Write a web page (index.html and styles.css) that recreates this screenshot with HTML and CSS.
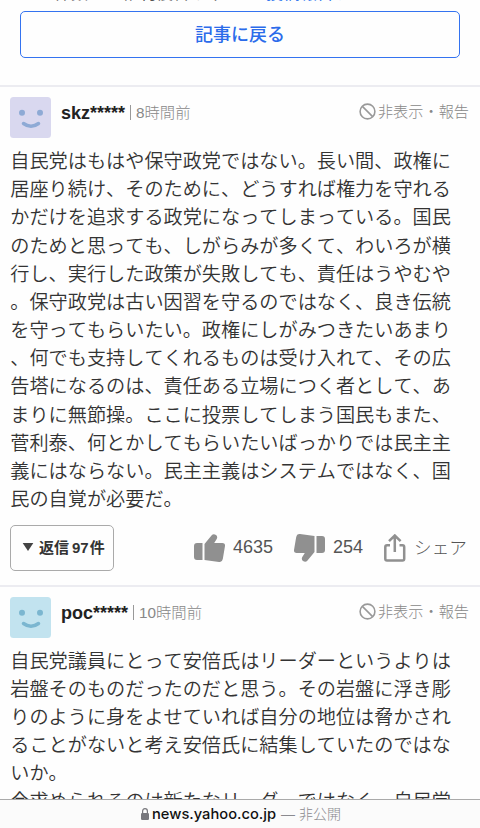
FILE: index.html
```html
<!DOCTYPE html>
<html lang="ja">
<head>
<meta charset="utf-8">
<title>コメント</title>
<link rel="stylesheet" href="styles.css">
</head>
<body>
<div class="page">
<main class="content">
  <section class="intro">
    <p class="notice"><span>この件数は、権利侵害や不</span><a>る 投稿報告す</a></p>
    <a class="back">記事に戻る</a>
  </section>
  <article class="comment">
    <header class="head">
      <svg class="avatar lilac" viewBox="0 0 41 41"><rect width="41" height="41" rx="3.5"/><circle cx="12" cy="15.7" r="3"/><circle cx="30" cy="15.7" r="3"/><path d="M13.5 26.5Q21 32 28.5 26.5"/></svg>
      <b class="name">skz*****</b><i class="bar"></i><span class="time">8時間前</span>
      <span class="report"><svg viewBox="0 0 17 17"><circle cx="8.5" cy="8.5" r="7.4"/><path d="M3.4 3.4 13.6 13.6"/></svg>非表示・報告</span>
    </header>
    <p class="text">自民党はもはや保守政党ではない。長い間、政権に<br>居座り続け、そのために、どうすれば権力を守れる<br>かだけを追求する政党になってしまっている。国民<br>のためと思っても、しがらみが多くて、わいろが横<br>行し、実行した政策が失敗しても、責任はうやむや<br>。保守政党は古い因習を守るのではなく、良き伝統<br>を守ってもらいたい。政権にしがみつきたいあまり<br>、何でも支持してくれるものは受け入れて、その広<br>告塔になるのは、責任ある立場につく者として、あ<br>まりに無節操。ここに投票してしまう国民もまた、<br>菅利泰、何とかしてもらいたいばっかりでは民主主<br>義にはならない。民主主義はシステムではなく、国<br>民の自覚が必要だ。</p>
    <footer class="actions">
      <button class="replies"><svg viewBox="0 0 12 9"><path d="M0 0H12L6 9Z"/></svg><span>返信<span class="num">97</span>件</span></button>
      <svg class="thumb" viewBox="0 0 31 28"><path d="M3 9H8.5V26H3Q0 26 0 23V12Q0 9 3 9ZM10.5 10 17.5 1.4Q19.5-.8 22 1Q24 2.6 22.7 5L20.2 9H28.5Q31.4 9.3 31 12L28.8 25Q28.2 28.3 25 28L10.5 26Z"/></svg>
      <span class="count up">4635</span>
      <svg class="thumb" viewBox="0 0 31 28"><path transform="rotate(180 15.5 14)" d="M3 9H8.5V26H3Q0 26 0 23V12Q0 9 3 9ZM10.5 10 17.5 1.4Q19.5-.8 22 1Q24 2.6 22.7 5L20.2 9H28.5Q31.4 9.3 31 12L28.8 25Q28.2 28.3 25 28L10.5 26Z"/></svg>
      <span class="count down">254</span>
      <svg class="share" viewBox="0 0 22 28"><path d="M6 11.2H3Q1.3 11.2 1.3 13V24.7Q1.3 26.5 3 26.5H18.5Q20.2 26.5 20.2 24.7V13Q20.2 11.2 18.5 11.2H15.5M10.8 18V2M5 7.2 10.8 1.5 16.6 7.2"/></svg>
      <span class="count label">シェア</span>
    </footer>
  </article>
  <article class="comment second">
    <header class="head">
      <svg class="avatar aqua" viewBox="0 0 41 41"><rect width="41" height="41" rx="3.5"/><circle cx="12" cy="15.7" r="3"/><circle cx="30" cy="15.7" r="3"/><path d="M13.5 26.5Q21 32 28.5 26.5"/></svg>
      <b class="name">poc*****</b><i class="bar"></i><span class="time">10時間前</span>
      <span class="report"><svg viewBox="0 0 17 17"><circle cx="8.5" cy="8.5" r="7.4"/><path d="M3.4 3.4 13.6 13.6"/></svg>非表示・報告</span>
    </header>
    <p class="text">自民党議員にとって安倍氏はリーダーというよりは<br>岩盤そのものだったのだと思う。その岩盤に浮き彫<br>りのように身をよせていれば自分の地位は脅かされ<br>ることがないと考え安倍氏に結集していたのではな<br>いか。<br>今求められるのは新たなリーダーではなく、自民党</p>
  </article>
</main>
<div class="address">
  <svg viewBox="0 0 8 12"><rect y="5" width="8" height="7" rx="1.2"/><path d="M1.6 6V3.2Q1.6.7 4 .7T6.4 3.2V6"/></svg>
  <span class="host">news.yahoo.co.jp</span><span class="private">— 非公開</span>
</div>
</div>
</body>
</html>
```
FILE: styles.css
```css
* { box-sizing: border-box; }
body { margin: 0; background: #fefefe; color: #333; font-family: "Liberation Sans", "Noto Sans CJK JP", sans-serif; }
.page { height: 828px; display: flex; flex-direction: column; overflow: hidden; }
.content { height: 799px; flex: none; overflow: hidden; }
.intro { display: flex; flex-direction: column; height: 87px; padding: 0 20px; border-bottom: 2px solid #ececf1; }
.notice { display: flex; flex: none; margin: -17px 0 6px; height: 22px; font-size: 17px; line-height: 22px; white-space: nowrap; color: #555; }
.notice a { margin-left: 20px; color: #347aef; }
.back { display: flex; flex: none; align-items: center; justify-content: center; height: 47px; padding-bottom: 3px; border: 1.5px solid #3473f0; border-radius: 5px; color: #2b6bea; font: 500 18px "Noto Sans CJK JP", sans-serif; }
.comment { padding: 10px 10px 0; height: 500px; border-bottom: 2px solid #ececf1; }
.comment.second { padding-top: 10px; border: 0; }
.head { display: flex; height: 41px; }
.avatar { width: 41px; height: 41px; margin-right: 10px; flex: none; }
.avatar path { fill: none; stroke-width: 3.5; stroke-linecap: round; }
.lilac rect { fill: #d9d8ef; }
.lilac circle { fill: #8eaad5; }
.lilac path { stroke: #8eaad5; }
.aqua rect { fill: #c2e3ef; }
.aqua circle { fill: #7bb6d0; }
.aqua path { stroke: #7bb6d0; }
.name { font: bold 18px/32px "Liberation Sans", sans-serif; color: #222; }
.bar { width: 1px; height: 15px; margin: 8px 5px 0; background: #999; }
.time { font-size: 15.3px; line-height: 31px; font-weight: 300; color: #888; }
.report { display: flex; align-items: center; height: 29px; margin-left: auto; margin-right: 1px; font-size: 15.2px; line-height: 20px; font-weight: 300; color: #888; gap: 1.5px; }
.report svg { width: 17px; height: 17px; fill: none; stroke: #999; stroke-width: 1.6; }
.text { margin: 8px 0 0 0.3px; font: 350 19.17px/28.17px "Noto Sans CJK JP", sans-serif; font-kerning: none; white-space: nowrap; }
.second .text { margin-top: 8px; line-height: 28px; }
.actions { display: flex; align-items: center; height: 46px; margin-top: 12.5px; }
.replies { display: flex; align-items: center; gap: 5px; width: 104px; height: 46px; padding: 0 0 2px 11px; margin: 0 80px 0 0; border: 1px solid #aaa; border-radius: 5px; background: #fefefe; color: #333; font: bold 15px "Noto Sans CJK JP", sans-serif; white-space: nowrap; }
.replies svg { width: 12px; height: 8px; fill: #444; }
.num { margin: 0 1px 0 3px; font-family: "Liberation Sans", sans-serif; }
.thumb { width: 31px; height: 28px; margin-right: 8px; fill: #909090; flex: none; }
.count { font-size: 18px; font-weight: 300; color: #555; white-space: nowrap; }
.up { margin-right: 21px; }
.down { margin-right: 21px; }
.label { font-size: 17.6px; margin-top: -3px; }
.share { width: 22px; height: 28px; margin-right: 8px; fill: none; stroke: #909090; stroke-width: 2.5; flex: none; }
.address { display: flex; align-items: center; height: 29px; padding-left: 141px; border-top: 1px solid #aaa; background: #fbfbfb; }
.address svg { width: 8px; height: 12px; margin-right: 3px; fill: #77777c; }
.address path { fill: none; stroke: #77777c; stroke-width: 1.2; }
.host { font: 500 14.7px "Inter", sans-serif; color: #111; }
.private { margin-left: 5px; margin-top: -2px; font-size: 14px; font-weight: 300; color: #8a8a8f; }
```
